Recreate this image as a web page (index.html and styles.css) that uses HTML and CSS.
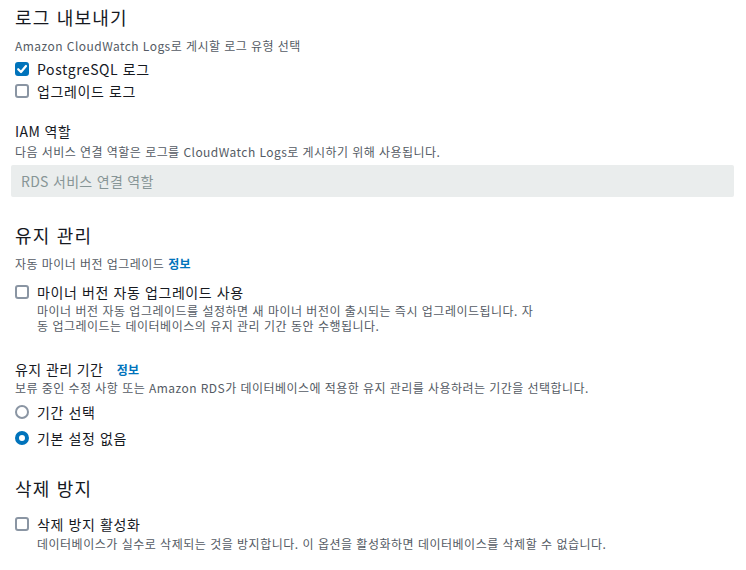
FILE: index.html
```html
<!DOCTYPE html>
<html lang="ko">
<head>
<meta charset="utf-8">
<link rel="stylesheet" href="styles.css">
</head>
<body>
<div class="page">
  <section class="sec sec-logs">
    <h2 class="title">로그 내보내기</h2>
    <p class="hint hint-after-title">Amazon CloudWatch Logs로 게시할 로그 유형 선택</p>
    <label class="opt opt-first"><span class="box checked"><svg viewBox="0 0 14 14" width="14" height="14"><path d="M3.2 7.2 L6 10 L11 4" fill="none" stroke="#fff" stroke-width="2.2" stroke-linecap="round" stroke-linejoin="round"/></svg></span><span class="opt-label">PostgreSQL 로그</span></label>
    <label class="opt"><span class="box"></span><span class="opt-label">업그레이드 로그</span></label>

    <div class="field-label iam">IAM 역할</div>
    <p class="hint hint-tight">다음 서비스 연결 역할은 로그를 CloudWatch Logs로 게시하기 위해 사용됩니다.</p>
    <div class="input">RDS 서비스 연결 역할</div>
  </section>

  <section class="sec sec-maint">
    <h2 class="title">유지 관리</h2>
    <p class="hint hint-after-title">자동 마이너 버전 업그레이드 <a class="info">정보</a></p>
    <div class="opt-block opt-after-hint">
      <label class="opt"><span class="box"></span><span class="opt-label">마이너 버전 자동 업그레이드 사용</span></label>
      <p class="opt-desc opt-desc-wrap">마이너 버전 자동 업그레이드를 설정하면 새 마이너 버전이 출시되는 즉시 업그레이드됩니다. 자동 업그레이드는 데이터베이스의 유지 관리 기간 동안 수행됩니다.</p>
    </div>

    <div class="field-label window">유지 관리 기간 <a class="info">정보</a></div>
    <p class="hint">보류 중인 수정 사항 또는 Amazon RDS가 데이터베이스에 적용한 유지 관리를 사용하려는 기간을 선택합니다.</p>
    <label class="opt radio-first"><span class="radio"></span><span class="opt-label">기간 선택</span></label>
    <label class="opt radio-second"><span class="radio on"></span><span class="opt-label">기본 설정 없음</span></label>
  </section>

  <section class="sec sec-delete">
    <h2 class="title">삭제 방지</h2>
    <div class="opt-block opt-after-title">
      <label class="opt"><span class="box"></span><span class="opt-label">삭제 방지 활성화</span></label>
      <p class="opt-desc opt-desc-single">데이터베이스가 실수로 삭제되는 것을 방지합니다. 이 옵션을 활성화하면 데이터베이스를 삭제할 수 없습니다.</p>
    </div>
  </section>
</div>
</body>
</html>
```

FILE: styles.css
```css
* { box-sizing: border-box; }
html, body { margin: 0; padding: 0; background: #ffffff; }
body {
  font-family: "Noto Sans CJK KR", "Noto Sans", sans-serif;
  color: #16191f;
}
.page {
  padding: 5px 12px 0 15px;
  display: flex;
  flex-direction: column;
}
.sec { display: flex; flex-direction: column; }
.sec-maint { margin-top: 26px; }
.sec-delete { margin-top: 27px; }

.title {
  margin: 0;
  font-size: 18px;
  font-weight: 400;
  line-height: 24px;
  letter-spacing: 1.2px;
  color: #16191f;
}
.hint {
  margin: 0;
  font-size: 12px;
  line-height: 16px;
  letter-spacing: 0.45px;
  color: #545b64;
}
.hint-after-title { margin-top: 9px; }
.hint-tight { margin-top: 3px; }

.opt {
  display: flex;
  align-items: center;
  gap: 8px;
  height: 22px;
  font-size: 14px;
  line-height: 22px;
  letter-spacing: 0.6px;
  color: #16191f;
}
.opt-first { margin-top: 4px; }
.opt-label { white-space: nowrap; }

.box {
  width: 14px;
  height: 14px;
  border: 2px solid #8a95a3;
  border-radius: 3px;
  background: #fff;
  flex: none;
  display: flex;
  align-items: center;
  justify-content: center;
}
.box.checked {
  background: #0073bb;
  border-color: #0073bb;
}
.box.checked svg { flex: none; }

.radio {
  width: 14px;
  height: 14px;
  border: 2px solid #8a95a3;
  border-radius: 50%;
  background: #fff;
  flex: none;
}
.radio.on { border: 4px solid #0073bb; }
.radio-first { margin-top: 5px; }
.radio-second { margin-top: 4px; }

.field-label {
  font-size: 14px;
  line-height: 20px;
  letter-spacing: 0.4px;
  color: #16191f;
}
.iam { margin-top: 19px; }
.window { margin-top: 26px; }

.info {
  color: #0073bb;
  font-size: 12px;
  font-weight: 700;
  text-decoration: none;
  margin-left: 9px;
}
.hint .info { margin-left: 0; }

.input {
  margin-top: 5px;
  margin-left: -4px;
  height: 32px;
  background: #eaeded;
  border-radius: 2px;
  padding: 0 10px;
  display: flex;
  align-items: center;
  font-size: 14px;
  letter-spacing: 0.3px;
  color: #879596;
}

.opt-block { display: flex; flex-direction: column; }
.opt-after-hint { margin-top: 9px; }
.opt-after-title { margin-top: 13px; }
.opt-desc {
  margin: 0 0 0 22px;
  font-size: 12px;
  line-height: 15px;
  letter-spacing: 0.5px;
  color: #545b64;
  word-break: break-all;
}
.opt-desc-wrap { max-width: 500px; }
.opt-desc-single { line-height: 16px; margin-top: 1px; }
```
